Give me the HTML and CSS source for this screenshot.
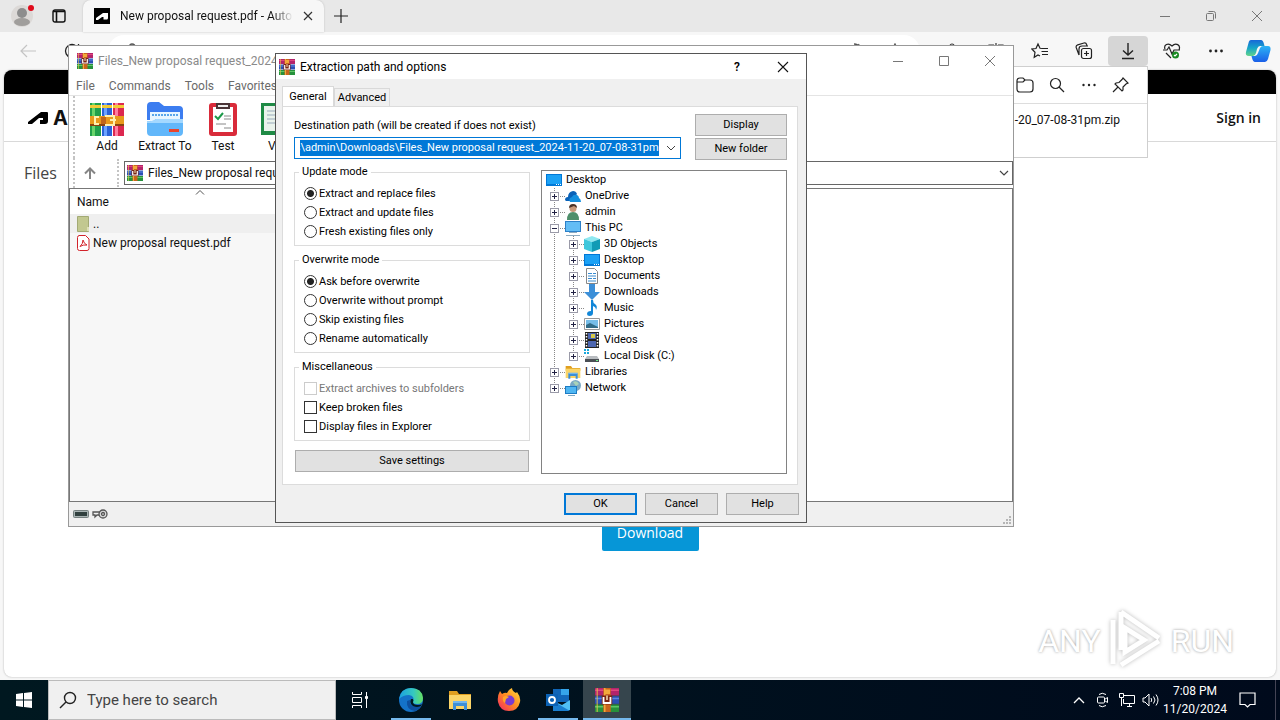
FILE: index.html
```html
<!DOCTYPE html>
<html lang="en">
<head>
    <meta charset="UTF-8">
    <meta name="viewport" content="width=device-width, initial-scale=1.0">
    <title>New proposal request.pdf - Autodesk</title>
    <link rel="stylesheet" href="styles.css">
</head>
<body>
    <!-- Shared icons -->
    <svg class="sprite" width="0" height="0" aria-hidden="true">
        <symbol id="i-rar" viewBox="0 0 16 16">
            <path fill="#b3246b" d="M0 0h16v5H0z"/>
            <path fill="#2b4fb5" d="M0 5.500h16v5H0z"/>
            <path fill="#27913c" d="M0 11h16v5H0z"/>
            <path fill="#e0457f" d="M0 1h16v1H0z"/>
            <path fill="#5c86e0" d="M0 6.500h16v1H0z"/>
            <path fill="#5fc468" d="M0 12h16v1H0z"/>
            <path fill="#e8c84a" d="M1 0h1v16H1z" opacity=".6"/>
            <path fill="#c9641c" d="M5.500 0h5v16h-5z"/>
            <path fill="#f2a93b" d="M6 0h1v16H6zM6 1h4v3H6z"/>
            <path fill="#7b2412" d="M4.500 5h7v6h-7z"/>
            <path fill="none" stroke="#fff" stroke-width="1.200" d="M5.700 6v4h4.600V6"/>
            <path fill="#f6e3b8" d="M7.500 5h1v3h-1z"/>
        </symbol>
        <symbol id="i-desktop" viewBox="0 0 16 16">
            <path fill="#0078d7" d="M0 2h16v12H0z"/>
            <path fill="#1ba1f5" d="M1 3h14v9H1z"/>
            <path fill="#fff" d="M10 12h1v1h-1zM12 12h1v1h-1zM14 12h1v1h-1z"/>
        </symbol>
        <symbol id="i-folder" viewBox="0 0 24 22">
            <path fill="#e09f1f" d="M1 2h8l2 3h12v4H1z"/>
            <path fill="#fbd568" d="M1 6h22v14H1z"/>
            <path fill="#3d8fd6" d="M5 13h14v8h-3v-4H8v4H5z"/>
            <path fill="#72b7ee" d="M5 12h14v2H5z"/>
        </symbol>
    </svg>

    <div class="browser">
        <!-- Tab strip -->
        <div class="tabstrip">
            <button class="icon-btn profile" aria-label="Profile">
                <svg width="24" height="24" viewBox="0 0 24 24"><circle cx="11" cy="12" r="11" fill="#dcd9d7"/><circle cx="11" cy="9" r="5" fill="#8d8d8d"/><ellipse cx="11" cy="18" rx="8" ry="4" fill="#a09e9c"/><circle cx="20" cy="4" r="3" fill="#e00b1c"/></svg>
            </button>
            <button class="icon-btn tab-actions" aria-label="Tab actions">
                <svg width="14" height="14" viewBox="0 0 14 14" fill="none" stroke="#111" stroke-width="1.400"><rect x="1" y="1" width="12" height="12" rx="2"/><path d="M1 2.500h12M4.500 3v10" stroke-width="1.600"/></svg>
            </button>
            <div class="tab">
                <svg width="16" height="16" viewBox="0 0 16 16"><path d="M0 0h16v16H0z"/><path fill="#fff" d="M2 12v-2l7-5h5v5c0 .8-.5 1.500-1.300 1.500H9.500V9H8l-4 3z"/></svg>
                <span class="tab-title">New proposal request.pdf - Auto</span>
                <button class="icon-btn" aria-label="Close tab">
                    <svg width="10" height="10" viewBox="0 0 10 10" stroke="#333" stroke-width="1.200"><path d="M1 1l8 8M9 1l-8 8"/></svg>
                </button>
            </div>
            <button class="icon-btn new-tab" aria-label="New tab">
                <svg width="14" height="14" viewBox="0 0 14 14" stroke="#222" stroke-width="1.200"><path d="M7 0v14M0 7h14"/></svg>
            </button>
            <div class="caption-btns">
                <button class="icon-btn" aria-label="Minimize"><svg width="12" height="12" viewBox="0 0 12 12" stroke="#777"><path d="M1 6.500h10"/></svg></button>
                <button class="icon-btn" aria-label="Restore"><svg width="12" height="12" viewBox="0 0 12 12" fill="none" stroke="#777"><rect x="1.500" y="3.500" width="7" height="7" rx="1"/><path d="M3.500 1.500h5q2 0 2 2v5"/></svg></button>
                <button class="icon-btn" aria-label="Close"><svg width="12" height="12" viewBox="0 0 12 12" stroke="#777"><path d="M1 1l10 10M11 1L1 11"/></svg></button>
            </div>
        </div>

        <!-- Address bar -->
        <div class="toolbar">
            <button class="icon-btn" aria-label="Back"><svg width="16" height="14" viewBox="0 0 16 14" fill="none" stroke="#c4c4c4" stroke-width="1.200"><path d="M16 7H1M7 1L1 7l6 6"/></svg></button>
            <button class="icon-btn" aria-label="Refresh"><svg width="16" height="16" viewBox="0 0 16 16" fill="none" stroke="#222" stroke-width="1.300"><path d="M14.500 8A6.500 6.500 0 1 1 12 2.900M14.500 1v4h-4"/></svg></button>
            <div class="omnibox">
                <svg width="12" height="14" viewBox="0 0 12 14" fill="none" stroke="#555" stroke-width="1.300"><path d="M3 6V4a3 3 0 0 1 6 0v2M1 6h10v7H1z"/></svg>
                <svg class="read" width="14" height="14" viewBox="0 0 14 14" fill="none" stroke="#555" stroke-width="1.300"><path d="M2 1q4 0 6 4M7 1l-5 12"/></svg>
                <svg width="14" height="14" viewBox="0 0 14 14" fill="none" stroke="#555" stroke-width="1.300"><path d="M7 1l2 4 4 1-3 3 1 4-4-2-4 2 1-4-3-3 4-1z"/></svg>
            </div>
            <div class="tools">
                <button class="icon-btn" aria-label="Extensions"><svg width="18" height="18" viewBox="0 0 18 18" fill="none" stroke="#333" stroke-width="1.200"><path d="M3 5h4V4a2 2 0 0 1 4 0v1h4v11H3z"/></svg></button>
                <button class="icon-btn" aria-label="Split screen"><svg width="18" height="18" viewBox="0 0 18 18" fill="none" stroke="#333" stroke-width="1.200"><path d="M9 1v16M7 3H2v12h5M11 3h5v12h-5"/></svg></button>
                <button class="icon-btn" aria-label="Favorites"><svg width="18" height="18" viewBox="0 0 18 18" fill="none" stroke="#222" stroke-width="1.200"><path d="M11 6.500L9 6.300 7 2 5 6.500.8 7l3.200 3.300-.8 5L7 13l2 1M11 6.500h6M10.500 9.500H17M11 12.500h6"/></svg></button>
                <button class="icon-btn" aria-label="Collections"><svg width="18" height="18" viewBox="0 0 18 18" fill="none" stroke="#222" stroke-width="1.200"><rect x="6.500" y="6.500" width="10" height="10" rx="2"/><path d="M11.500 9v5M9 11.500h5M4 13L1.200 5.500q-.5-2 1.500-2.600L9 1q2-.5 2.600 1.500l.4 1M4 13V7q0-3 3-3H13"/></svg></button>
                <button class="icon-btn active" aria-label="Downloads"><svg width="16" height="18" viewBox="0 0 16 18" fill="none" stroke="#222" stroke-width="1.400"><path d="M8 1v12M3 8.500L8 13l5-4.500M2 16.500h12"/></svg></button>
                <button class="icon-btn" aria-label="Browser essentials"><svg width="18" height="18" viewBox="0 0 18 18" fill="none" stroke="#222" stroke-width="1.200"><path d="M2 7C.5 3 5 0 9 4c4-4 9-1 7 4M0 8h4l2-3 3 7 2-4h6M3 11l5 5"/><circle cx="12.500" cy="13" r="3.500" fill="#188a22" stroke="none"/><path stroke="#fff" d="M11 13l1 1 2-2"/></svg></button>
                <button class="icon-btn" aria-label="Settings and more"><svg width="16" height="4" viewBox="0 0 16 4" fill="#222"><circle cx="2.500" cy="2" r="1.400"/><circle cx="8" cy="2" r="1.400"/><circle cx="13.500" cy="2" r="1.400"/></svg></button>
                <button class="icon-btn" aria-label="Copilot"><svg width="26" height="24" viewBox="0 0 26 24">
                    <defs><linearGradient id="cp1" x2="0" y2="1"><stop offset="0" stop-color="#1868d8"/><stop offset=".5" stop-color="#16a5c8"/><stop offset="1" stop-color="#63d48a"/></linearGradient><linearGradient id="cp2" x2="0" y2="1"><stop offset="0" stop-color="#2cb3f5"/><stop offset="1" stop-color="#1a5fe8"/></linearGradient></defs>
                    <path fill="url(#cp1)" d="M6 1h10q2 0 3 4l.5 2H15q-2 0-3 3l-1 4q-1 3-3 3H4q-4 0-3-4L3.500 4Q4 1 6 1z"/>
                    <path fill="url(#cp2)" d="M21 7h2q3 0 2.500 4L23 20q-1 3-3 3H10q-2 0-3-4l-.5-2H10q2 0 3-3l2-5q1-2 3-2z"/>
                </svg></button>
            </div>
        </div>

        <!-- Page -->
        <div class="page">
            <div class="band"></div>
            <header class="site-header">
                <a href="#" class="brand"><svg width="20" height="14" viewBox="0 0 20 14"><path d="M0 13v-2L13 1h6q1 0 1 1v8q0 3-3 3h-5V9h3V7h-4l-7 6z"/></svg>AUTODESK</a>
                <a href="#" class="sign-in">Sign in</a>
            </header>
            <h2>Files</h2>
            <button class="download">Download</button>
            <div class="watermark"><span>ANY</span><svg width="58" height="66" viewBox="0 0 58 66" fill="none" stroke="#fff" stroke-width="5"><path d="M14 4l38 26M14 4v38M6 12v44M14 57l38-24M18 20v24l19-12z"/></svg><span>RUN</span></div>
        </div>

        <!-- Downloads flyout -->
        <div class="flyout">
            <div class="flyout-head">
                <button class="icon-btn" aria-label="Open folder"><svg width="18" height="16" viewBox="0 0 18 16" fill="none" stroke="#222" stroke-width="1.200"><path d="M1 4q0-3 3-3h3l2 2h5q3 0 3 3v6q0 3-3 3H4q-3 0-3-3zM1 5h6l2-2"/></svg></button>
                <button class="icon-btn" aria-label="Search downloads"><svg width="16" height="16" viewBox="0 0 16 16" fill="none" stroke="#222" stroke-width="1.200"><circle cx="6.500" cy="6.500" r="5"/><path d="M10 10l5 5"/></svg></button>
                <button class="icon-btn" aria-label="More"><svg width="16" height="4" viewBox="0 0 16 4" fill="#222"><circle cx="2.500" cy="2" r="1.200"/><circle cx="8" cy="2" r="1.200"/><circle cx="13.500" cy="2" r="1.200"/></svg></button>
                <button class="icon-btn" aria-label="Pin"><svg width="18" height="18" viewBox="0 0 18 18" fill="none" stroke="#222" stroke-width="1.200"><path d="M11 2l5 5-2 1-3 3v3l-1 1-7-7 1-1 3-.5 3-3zM6 11l-5 5"/></svg></button>
            </div>
            <p>Files_New proposal request_2024-11-20_07-08-31pm.zip</p>
        </div>
    </div>

    <!-- Archive window -->
    <div class="window archive">
        <div class="titlebar">
            <svg width="16" height="16"><use href="#i-rar"/></svg>
            <span>Files_New proposal request_2024-</span>
            <div class="caption-btns">
                <button class="icon-btn" aria-label="Minimize"><svg width="12" height="12" viewBox="0 0 12 12" stroke="#777"><path d="M1 6.500h10"/></svg></button>
                <button class="icon-btn" aria-label="Maximize"><svg width="12" height="12" viewBox="0 0 12 12" fill="none" stroke="#777"><path d="M1.500 1.500h9v9h-9z"/></svg></button>
                <button class="icon-btn" aria-label="Close"><svg width="12" height="12" viewBox="0 0 12 12" stroke="#777"><path d="M1 1l10 10M11 1L1 11"/></svg></button>
            </div>
        </div>
        <nav class="menubar">
            <a href="#">File</a>
            <a href="#">Commands</a>
            <a href="#">Tools</a>
            <a href="#">Favorites</a>
        </nav>
        <div class="commands">
            <button>
                <svg width="34" height="34" viewBox="0 0 34 34"><path fill="#21a04a" d="M0 1h11v33H0z"/><path fill="#2a62d8" d="M12 1h10v33H12z"/><path fill="#dc2850" d="M23 1h11v33H23z"/><path fill="#69d46a" d="M2 1h3v33H2z"/><path fill="#6ba2ff" d="M14 1h3v33h-3z"/><path fill="#ff7da0" d="M25 1h3v33h-3z"/><path fill="#f3cb35" d="M0 3h11v3H0zM23 3h11v3H23zM12 3h10v3H12z"/><path fill="#e89a1c" d="M0 14h34v9H0z"/><path fill="#8a4310" d="M0 22h34v2H0z"/><path fill="none" stroke="#fff0ae" stroke-width="2" d="M9 15H5v7h4M15 14h9v9h-9M20 18h6"/><path fill="#c0651c" d="M11 15h5v7h-5z"/></svg>
                Add
            </button>
            <button>
                <svg width="36" height="34" viewBox="0 0 36 34"><path fill="#3c7df0" d="M0 4q0-4 4-4h8l5 4h15q4 0 4 4v10H0z"/><path fill="#e9f6ff" d="M3 10h30v10H3z"/><path stroke="#5aa6ea" stroke-width="2" stroke-dasharray="2 1" d="M5 13h26"/><path fill="#62b7fa" d="M0 19q6 1 9-2h27v13q0 4-4 4H4q-4 0-4-4z"/><path fill="#a3d8ff" d="M0 19q6 1 9-2h27v4H0z"/><path fill="#e8442e" d="M22 27h10v3H22z"/></svg>
                Extract To
            </button>
            <button>
                <svg width="28" height="34" viewBox="0 0 28 34"><rect y="1" width="28" height="33" rx="3" fill="#d92b3a"/><path fill="#fff" d="M4 5h20v25H4z"/><path fill="#4a3436" d="M7 1h14v6H7z"/><path fill="#eee" d="M9 3h10v2H9z"/><path fill="none" stroke="#1d9a4a" stroke-width="2" d="M6 14l3 3 5-6"/><path stroke="#888" d="M15 14h7M15 17h7M7 22h10M15 26h7"/></svg>
                Test
            </button>
            <button>
                <svg width="40" height="34" viewBox="0 0 40 34"><path fill="#1f8a45" d="M0 1h40v32H0z"/><path fill="#eaf3ec" d="M3 4h34v25H3z"/><path stroke="#9ab" d="M6 9h12M6 13h12M6 17h12M6 21h12"/></svg>
                View
            </button>
        </div>
        <div class="pathrow">
            <button class="icon-btn up" aria-label="Up one level"><svg width="12" height="12" viewBox="0 0 12 12" fill="none" stroke="#858585" stroke-width="2"><path d="M6 12V2M1 6.500L6 1.500l5 5"/></svg></button>
            <div class="path">
                <svg width="16" height="16"><use href="#i-rar"/></svg>
                <span>Files_New proposal requ</span>
                <svg width="10" height="6" viewBox="0 0 10 6" fill="none" stroke="#444" stroke-width="1.200"><path d="M1 1l4 4 4-4"/></svg>
            </div>
        </div>
        <div class="listing">
            <svg class="sort" width="10" height="5" viewBox="0 0 10 5" fill="none" stroke="#555"><path d="M1 4.500l4-4 4 4"/></svg>
            <table>
                <thead>
                    <tr><th>Name</th></tr>
                </thead>
                <tbody>
                    <tr class="current"><td><svg width="13" height="16" viewBox="0 0 13 16"><path fill="#c2c890" stroke="#a3aa75" d="M.5.500h11v15H.5z"/><path fill="#dde0b8" d="M10 11h2v4h-2z"/></svg>..</td></tr>
                    <tr><td><svg width="13" height="16" viewBox="0 0 13 16" fill="none" stroke="#d2222a"><path fill="#fff" d="M2 .5h6.500L12 4v9.500q0 2-2 2H2.500q-2 0-2-2v-11q0-2 2-2z"/><path d="M6 5q1 4 4 5-4-.5-7 1.500Q6 9 6 5z"/></svg>New proposal request.pdf</td></tr>
                </tbody>
            </table>
        </div>
        <div class="statusbar">
            <svg width="16" height="8" viewBox="0 0 16 8"><rect x=".5" y=".5" width="15" height="7" rx="1" fill="#a9b4b4" stroke="#768080"/><path fill="#31403f" d="M2 2h12v4H2z"/></svg>
            <svg width="16" height="10" viewBox="0 0 16 10" fill="none" stroke="#555" stroke-width="1.300"><path d="M8 3H1v3h2v2l2-2h3"/><circle cx="11" cy="5" r="4" fill="#ddd"/><circle cx="11" cy="5" r="1.500"/></svg>
            <svg class="grip" width="10" height="10" viewBox="0 0 10 10" fill="#b5b5b5"><path d="M7 0h2v2H7zM7 3h2v2H7zM4 3h2v2H4zM7 6h2v2H7zM4 6h2v2H4zM1 6h2v2H1z"/></svg>
        </div>
    </div>

    <!-- Extraction dialog -->
    <form class="window dialog">
        <div class="titlebar">
            <svg width="16" height="16"><use href="#i-rar"/></svg>
            <span>Extraction path and options</span>
            <div class="caption-btns">
                <button type="button" class="icon-btn help-btn" aria-label="Help">?</button>
                <button type="button" class="icon-btn" aria-label="Close"><svg width="12" height="12" viewBox="0 0 12 12" stroke="#111" stroke-width="1.100"><path d="M1 1l10 10M11 1L1 11"/></svg></button>
            </div>
        </div>
        <div class="tabs">
            <button type="button" class="selected">General</button>
            <button type="button">Advanced</button>
        </div>
        <div class="panel">
            <div class="dest">
                <label for="dest">Destination path (will be created if does not exist)</label>
                <div class="combo">
                    <input id="dest" type="text" value="C:\Users\admin\Downloads\Files_New proposal request_2024-11-20_07-08-31pm">
                    <button type="button" class="icon-btn" aria-label="History"><svg width="10" height="6" viewBox="0 0 10 6" fill="none" stroke="#444"><path d="M1 1l4 4 4-4"/></svg></button>
                </div>
            </div>
            <div class="dest-btns">
                <button type="button" class="btn">Display</button>
                <button type="button" class="btn">New folder</button>
            </div>
            <div class="options">
                <fieldset>
                    <legend>Update mode</legend>
                    <label><input type="radio" name="update" checked>Extract and replace files</label>
                    <label><input type="radio" name="update">Extract and update files</label>
                    <label><input type="radio" name="update">Fresh existing files only</label>
                </fieldset>
                <fieldset>
                    <legend>Overwrite mode</legend>
                    <label><input type="radio" name="overwrite" checked>Ask before overwrite</label>
                    <label><input type="radio" name="overwrite">Overwrite without prompt</label>
                    <label><input type="radio" name="overwrite">Skip existing files</label>
                    <label><input type="radio" name="overwrite">Rename automatically</label>
                </fieldset>
                <fieldset>
                    <legend>Miscellaneous</legend>
                    <label class="disabled"><input type="checkbox" disabled>Extract archives to subfolders</label>
                    <label><input type="checkbox">Keep broken files</label>
                    <label><input type="checkbox">Display files in Explorer</label>
                </fieldset>
                <button type="button" class="btn">Save settings</button>
            </div>
            <div class="tree">
                <div class="node root"><svg width="16" height="16"><use href="#i-desktop"/></svg>Desktop</div>
                <ul>
                    <li><div class="node"><i></i><svg width="16" height="16" viewBox="0 0 16 16"><path fill="#0a62b8" d="M0 12q0-3 3-3 0-5 5-6 3 0 4 3l-6 7H1z"/><path fill="#1490df" d="M5 14q-2-4 2-5 1-3 5-2 2 1 2 3 2 1 2 4z"/></svg>OneDrive</div></li>
                    <li><div class="node"><i></i><svg width="16" height="16" viewBox="0 0 16 16"><circle cx="8" cy="4.500" r="3.500" fill="#c9997a"/><path fill="#4b3328" d="M4 4q0-4 4-4t4 4l-3-2z"/><path fill="#4f8f6b" d="M2 16q0-8 6-8t6 8z"/></svg>admin</div></li>
                    <li><div class="node"><i class="open"></i><svg width="16" height="16" viewBox="0 0 16 16"><path fill="#2c80c8" d="M0 1h16v11H0z"/><path fill="#63bdf5" d="M1 2h14v9H1z"/><path fill="#8dabc0" d="M4 12h8v1H4zM1 15h14v1H1z"/></svg>This PC</div>
                        <ul>
                            <li><div class="node"><i></i><svg width="16" height="16" viewBox="0 0 16 16"><path fill="#8fe8f0" d="M0 3l8-3 8 3-8 3z"/><path fill="#3fc7dc" d="M0 3l8 3v10l-8-3z"/><path fill="#119bb5" d="M16 3L8 6v10l8-3z"/></svg>3D Objects</div></li>
                            <li><div class="node"><i></i><svg width="16" height="16"><use href="#i-desktop"/></svg>Desktop</div></li>
                            <li><div class="node"><i></i><svg width="16" height="16" viewBox="0 0 16 16"><path fill="#fff" stroke="#888" d="M2.500.500h8l3 3v12h-11z"/><path stroke="#3a8cd0" d="M4 5.500h4M9 5.500h3M4 8h8M4 10.500h4M9 10.500h3M4 13h8"/></svg>Documents</div></li>
                            <li><div class="node"><i></i><svg width="16" height="16" viewBox="0 0 16 16"><path fill="#3c8fd8" d="M5 0h6v8h5l-8 8-8-8h5z"/></svg>Downloads</div></li>
                            <li><div class="node"><i></i><svg width="16" height="16" viewBox="0 0 16 16"><path fill="#1287d8" d="M7 0h2q0 3 2 4 3 2 1 6 0-3-3-4v7q0 3-3.500 3Q3 16 3 14q0-3 4-3z"/></svg>Music</div></li>
                            <li><div class="node"><i></i><svg width="16" height="16" viewBox="0 0 16 16"><path fill="#fff" stroke="#999" d="M.5 2.500h15v11H.5z"/><path fill="#76bde8" d="M2 4h12v8H2z"/><path fill="#316b86" d="M2 9l4-2 8 4v1H2z"/></svg>Pictures</div></li>
                            <li><div class="node"><i></i><svg width="16" height="16" viewBox="0 0 16 16"><path fill="#222" d="M1 0h14v16H1z"/><path stroke="#fff" stroke-width="1.500" stroke-dasharray="1.500 1.500" d="M2.500 1v15M13.500 1v15"/><path fill="#4c66b0" d="M4 1h8v6H4zM4 9h8v6H4z"/><path fill="#d5c84a" d="M7 2h4v4H7z"/></svg>Videos</div></li>
                            <li><div class="node"><i></i><svg width="16" height="16" viewBox="0 0 16 16"><path fill="#19a8dc" d="M0 1h2v2H0zM3 1h2v2H3zM0 4h2v2H0zM3 4h2v2H3z"/><path fill="#b8bcc0" d="M3 8h10l2 3H1z"/><path fill="#4a4f54" d="M1 11h14v3H1z"/><path fill="#6ef08a" d="M12 12h2v1h-2z"/></svg>Local Disk (C:)</div></li>
                        </ul>
                    </li>
                    <li><div class="node"><i></i><svg width="16" height="16"><use href="#i-folder"/></svg>Libraries</div></li>
                    <li><div class="node"><i></i><svg width="16" height="16" viewBox="0 0 16 16"><circle cx="10.500" cy="5.500" r="5.500" fill="#7aa9c4"/><path fill="#a9d3b8" d="M8 2q4-2 6 2l-3 2z"/><path fill="#1d7cc4" d="M0 6h12v8H0z"/><path fill="#4fb6f2" d="M1 7h10v6H1z"/><path fill="#7fa8c2" d="M3 15h7v1H3z"/></svg>Network</div></li>
                </ul>
            </div>
        </div>
        <div class="actions">
            <button type="button" class="btn default">OK</button>
            <button type="button" class="btn">Cancel</button>
            <button type="button" class="btn">Help</button>
        </div>
    </form>

    <!-- Taskbar -->
    <div class="taskbar">
        <button class="icon-btn start" aria-label="Start"><svg width="16" height="16" viewBox="0 0 16 16" fill="#fff"><path d="M0 2l7-1v6.500H0zM8 1l8-1v7.500H8zM0 8.500h7V15l-7-1zM8 8.500h8V16l-8-1z"/></svg></button>
        <label class="search">
            <svg width="18" height="18" viewBox="0 0 18 18" fill="none" stroke="#222" stroke-width="1.400"><circle cx="11" cy="7" r="5.500"/><path d="M7 11l-6 6"/></svg>
            <input type="text" placeholder="Type here to search" aria-label="Search">
        </label>
        <div class="apps">
            <button class="icon-btn task-view" aria-label="Task view"><svg width="18" height="16" viewBox="0 0 18 16" fill="none" stroke="#fff"><path d="M1.500 0v2.500h9V0M1.500 16v-2.500h9V16M1.500 5.500h9v5h-9zM15.500 0v16"/><path fill="#fff" d="M14.500 4.500h2v2h-2z"/></svg></button>
            <button class="icon-btn running" aria-label="Edge"><svg width="24" height="24" viewBox="0 0 24 24">
                <defs><linearGradient id="ed1"><stop offset="0" stop-color="#1ba0e0"/><stop offset=".6" stop-color="#35c8c0"/><stop offset="1" stop-color="#66e060"/></linearGradient></defs>
                <circle cx="12" cy="12" r="12" fill="#1472c8"/><path fill="url(#ed1)" d="M0 11Q2 0 12 0q11 0 12 10 0 6-6 6-5 0-4-3 2-5-4-6-6 0-10 4z"/><path fill="#0d4f9e" d="M8 13q-1 9 8 10 4-1 6-5-4 2-8 0-4-2-3-6z"/><path fill="#001820" d="M14 11q1 2 0 3 0 3 5 3 3 0 4-1l-1 2q-4 2-8 0-4-3-2-7z"/></svg></button>
            <button class="icon-btn" aria-label="File Explorer"><svg width="24" height="22"><use href="#i-folder"/></svg></button>
            <button class="icon-btn" aria-label="Firefox"><svg width="24" height="24" viewBox="0 0 24 24">
                <defs><linearGradient id="ff1" x1="1" y1="0" x2="0" y2="1"><stop offset="0" stop-color="#ffe040"/><stop offset=".5" stop-color="#ff8a20"/><stop offset="1" stop-color="#f2206c"/></linearGradient></defs>
                <path fill="url(#ff1)" d="M3 3l2 3q3-2 5-1 2-4 5-5 0 3 4 5l1-1q4 5 3 10-2 9-11 9T1 14Q0 8 3 3z"/><circle cx="12.500" cy="12.500" r="5" fill="#7a3bd0"/><path fill="#ffa52a" d="M6 9q3-2 6 0l-3 2-1 4q-3-2-2-6z"/></svg></button>
            <button class="icon-btn running" aria-label="Outlook"><svg width="24" height="22" viewBox="0 0 24 22"><path fill="#1066b8" d="M7 0h16v13H7z"/><path fill="#35a5ea" d="M15 0h8v6h-8z"/><path fill="#50c0f5" d="M7 12l9 4 8-5v10H7z"/><path fill="#1a7fd0" d="M7 12l17 10H7z"/><path fill="#0b62b5" d="M0 5h12v12H0z"/><circle cx="6" cy="11" r="3" fill="none" stroke="#fff" stroke-width="1.800"/></svg></button>
            <button class="icon-btn running current" aria-label="WinRAR"><svg width="24" height="24"><use href="#i-rar"/></svg></button>
        </div>
        <div class="tray">
            <button class="icon-btn" aria-label="Show hidden icons"><svg width="12" height="8" viewBox="0 0 12 8" fill="none" stroke="#fff" stroke-width="1.300"><path d="M1 7l5-5 5 5"/></svg></button>
            <button class="icon-btn" aria-label="Meet now"><svg width="14" height="16" viewBox="0 0 14 16" fill="none" stroke="#fff"><rect x="1.500" y="5" width="7" height="6" rx="1"/><path d="M8.500 7.500l3-2v5l-3-2M3 2.500q3-2.500 7 0M3 13.500q3 2.500 7 0"/></svg></button>
            <button class="icon-btn" aria-label="Network"><svg width="16" height="14" viewBox="0 0 16 14" fill="none" stroke="#fff"><path d="M5 2.500h10.500v8H4.500V6M8 13.500h5M10.500 11v2M.5.500h4v4h-4zM2.500 5v8"/></svg></button>
            <button class="icon-btn" aria-label="Volume"><svg width="18" height="14" viewBox="0 0 18 14" fill="none" stroke="#fff"><path d="M1 5h2l4-4v12L3 9H1zM9 5q1.500 2 0 4M11.500 3.500q3 3.500 0 7M14 1.500q4 5.500 0 11"/></svg></button>
            <div class="clock">7:08 PM<br>11/20/2024</div>
            <button class="icon-btn notify" aria-label="Notifications"><svg width="17" height="16" viewBox="0 0 17 16" fill="none" stroke="#fff" stroke-width="1.200"><path d="M1 1h15v11.500h-5L8.500 15 6 12.500H1z"/></svg></button>
        </div>
    </div>

    <script>
        // Keep the end of a long path in view
        const dest = document.getElementById('dest');
        dest.scrollLeft = dest.scrollWidth;
    </script>
</body>
</html>
```

FILE: styles.css
```css
* {
    box-sizing: border-box;
    margin: 0;
    padding: 0;
}

body {
    font-family: Roboto, "Open Sans", sans-serif;
    font-size: 12px;
    line-height: 16px;
    color: #111;
    height: 100vh;
    display: flex;
    flex-direction: column;
    overflow: hidden;
    position: relative;
}

button, input {
    font: inherit;
    color: inherit;
}

a {
    color: inherit;
    text-decoration: none;
}

svg {
    display: block;
    flex: none;
}

.sprite {
    position: absolute;
}

.icon-btn {
    border: 0;
    background: none;
    display: flex;
    align-items: center;
    justify-content: center;
}

/* Browser */
.browser {
    flex: 1;
    min-height: 0;
    background: #f7f7f7;
    display: flex;
    flex-direction: column;
    padding-bottom: 3px;
}

.tabstrip {
    height: 32px;
    background: #e8e8e8;
    display: flex;
    align-items: center;
}

.profile {
    margin-left: 11px;
}

.tab-actions {
    width: 48px;
}

.tab {
    width: 241px;
    height: 32px;
    background: #f7f7f7;
    border-radius: 8px 8px 0 0;
    box-shadow: 0 0 2px #bbb;
    display: flex;
    align-items: center;
    padding: 0 11px;
    gap: 10px;
}

.tab-title {
    flex: 1;
    white-space: nowrap;
    -webkit-mask-image: linear-gradient(to right, #000 88%, transparent);
    mask-image: linear-gradient(to right, #000 88%, transparent);
}

.new-tab {
    width: 34px;
}

.caption-btns {
    margin-left: auto;
    display: flex;
}

.caption-btns .icon-btn {
    width: 46px;
    height: 28px;
}

.toolbar {
    height: 38px;
    display: flex;
    align-items: center;
    padding: 0 4px 0 20px;
}

.toolbar > .icon-btn {
    margin-right: 28px;
}

.omnibox {
    flex: 1;
    height: 32px;
    border-radius: 16px;
    background: #fff;
    padding: 8px 18px;
    display: flex;
    gap: 22px;
}

.omnibox .read {
    margin-left: auto;
}

.tools {
    display: flex;
    margin-left: 8px;
}

.tools .icon-btn {
    width: 40px;
    height: 30px;
    margin-left: 4px;
    border-radius: 4px;
}

.tools .icon-btn:last-child {
    width: 36px;
}

.tools .active {
    background: #d6d6d6;
}

.page {
    flex: 1;
    min-height: 0;
    margin: 0 4px;
    background: #fff;
    border-radius: 8px;
    box-shadow: 0 0 2px #aaa;
    overflow: hidden;
    display: flex;
    flex-direction: column;
    position: relative;
    font-family: "Open Sans", sans-serif;
}

.band {
    height: 24px;
    background: #000;
}

.site-header {
    height: 48px;
    border-bottom: 1px solid #d9d9d9;
    display: flex;
    justify-content: space-between;
    align-items: center;
    padding: 0 15px 0 24px;
}

.brand {
    display: flex;
    align-items: center;
    gap: 5px;
    font: bold 20px/24px Inter, sans-serif;
}

.sign-in {
    font-size: 14px;
    font-weight: 600;
}

.page h2 {
    font-size: 16px;
    font-weight: 400;
    line-height: 24px;
    color: #444;
    padding: 19px 20px;
}

.download {
    align-self: center;
    flex: none;
    width: 97px;
    height: 36px;
    margin-top: 311px;
    margin-left: 20px;
    border: 0;
    border-radius: 2px;
    background: #0696d7;
    color: #fff;
    font-size: 14px;
}

.watermark {
    position: absolute;
    right: 42px;
    bottom: 3px;
    display: flex;
    align-items: center;
    gap: 6px;
    font: 32px/44px Roboto, sans-serif;
    color: #fff;
    text-shadow: 0 0 3px #999;
}

.watermark svg {
    filter: drop-shadow(0 0 2px #bbb);
}

/* Downloads flyout hangs below its toolbar button */
.flyout {
    position: absolute;
    top: 66px;
    right: 132px;
    width: 360px;
    height: 92px;
    background: #fff;
    border: 1px solid #cfcfcf;
}

.flyout-head {
    height: 37px;
    border-bottom: 1px solid #ddd;
    display: flex;
    justify-content: flex-end;
    padding-right: 10px;
}

.flyout-head .icon-btn {
    width: 32px;
}

.flyout p {
    padding: 8px 27px;
    text-align: right;
    white-space: nowrap;
}

/* Desktop windows */
.window {
    position: absolute;
    background: #f0f0f0;
    border: 1px solid #999;
}

.titlebar {
    display: flex;
    align-items: center;
    gap: 5px;
    background: #fff;
    white-space: nowrap;
}

.archive {
    left: 68px;
    top: 45px;
    width: 946px;
    background: #fff;
}

.archive .titlebar {
    height: 30px;
    padding-left: 8px;
    color: #8a8a8a;
}

.menubar {
    display: flex;
    gap: 14px;
    height: 20px;
    padding: 2px 7px;
    border-bottom: 1px solid #e4e4e4;
    color: #6a6a6a;
}

.commands {
    display: flex;
    height: 62px;
    margin-left: 4px;
    border-left: 2px dotted #c4c4c4;
    padding: 6px 3px;
}

.commands button {
    width: 58px;
    border: 0;
    background: none;
    display: flex;
    flex-direction: column;
    align-items: center;
    gap: 2px;
    white-space: nowrap;
}

.pathrow {
    display: flex;
    align-items: center;
    height: 30px;
    margin-left: 4px;
    border-left: 2px dotted #c4c4c4;
}

.up {
    width: 44px;
    height: 28px;
    margin-right: 5px;
    padding-right: 12px;
    border-right: 2px dotted #c4c4c4;
}

.path {
    flex: 1;
    height: 24px;
    border: 1px solid #666;
    display: flex;
    align-items: center;
    gap: 5px;
    padding: 0 3px 0 2px;
}

.path span {
    flex: 1;
}

.listing {
    position: relative;
    height: 314px;
    border: 1px solid #777;
}

.sort {
    position: absolute;
    left: 125px;
    top: 1px;
}

table {
    border-collapse: collapse;
    width: 260px;
    height: 100%;
    background: #f7f7f7;
}

thead {
    background: #fff;
}

th {
    height: 25px;
    text-align: left;
    font-weight: 400;
    padding-left: 7px;
}

td {
    height: 19px;
    padding-left: 7px;
}

td svg {
    display: inline-block;
    vertical-align: top;
    margin-right: 3px;
}

tbody tr:last-child td {
    height: auto;
    vertical-align: top;
    padding-top: 2px;
}

.current td {
    background: #efefef;
}

.statusbar {
    height: 24px;
    background: #f0f0f0;
    display: flex;
    align-items: center;
    gap: 3px;
    padding: 0 1px 0 4px;
}

.grip {
    margin-left: auto;
    align-self: flex-end;
}

/* Extraction dialog */
.dialog {
    left: 275px;
    top: 53px;
    width: 532px;
    padding-bottom: 7px;
    border-color: #555;
    font-size: 11px;
    color: #000;
}

.dialog .titlebar {
    height: 25px;
    padding-left: 3px;
    font-size: 12px;
}

.help-btn {
    font-weight: 600;
}

.tabs {
    display: flex;
    align-items: flex-end;
    margin: 7px 6px 0;
    height: 20px;
}

.tabs button {
    height: 18px;
    width: 56px;
    border: 1px solid #d9d9d9;
    border-bottom: 0;
    background: #f0f0f0;
}

.tabs .selected {
    height: 20px;
    width: 52px;
    background: #fff;
}

.panel {
    margin: 0 8px 0 6px;
    background: #fff;
    border: 1px solid #dcdcdc;
    display: grid;
    grid-template-columns: 236px 1fr 92px;
    padding: 7px 10px 10px 11px;
}

.dest {
    grid-column: 1 / 3;
    margin-right: 14px;
    padding-top: 4px;
}

.dest label {
    display: block;
    height: 19px;
}

.combo {
    height: 22px;
    border: 1px solid #0078d7;
    display: flex;
    padding: 2px 0 2px 5px;
}

.combo input {
    flex: 1;
    min-width: 0;
    border: 0;
    background: #0078d7;
    color: #fff;
}

.combo .icon-btn {
    width: 18px;
    margin-left: 3px;
}

.dest-btns {
    display: flex;
    flex-direction: column;
    gap: 2px;
}

.btn {
    height: 22px;
    border: 1px solid #adadad;
    background: #e1e1e1;
}

.options {
    margin-top: 4px;
    padding-bottom: 2px;
    display: flex;
    flex-direction: column;
}

fieldset {
    border: 1px solid #dcdcdc;
    padding: 4px 9px;
    margin-bottom: 6px;
    display: flex;
    flex-direction: column;
}

legend {
    padding: 0 3px;
    margin-left: -5px;
}

fieldset label {
    display: flex;
    align-items: center;
    gap: 2px;
    height: 19px;
}

fieldset input {
    appearance: none;
    width: 13px;
    height: 13px;
    border: 1px solid #333;
    background: #fff;
}

fieldset input[type="radio"] {
    border-radius: 50%;
}

fieldset input[type="radio"]:checked {
    background: radial-gradient(circle, #222 3px, #fff 4px);
}

.disabled {
    color: #777;
}

.disabled input {
    border-color: #ccc;
}

.options .btn {
    margin: 3px 1px 0;
}

.tree {
    grid-column: 2 / 4;
    margin: 10px 0 0 11px;
    border: 1px solid #828282;
    padding: 1px 4px;
    line-height: 16px;
}

.tree ul {
    list-style: none;
    margin-left: 8px;
    background: repeating-linear-gradient(#888 0 1px, transparent 1px 2px) no-repeat left top / 1px calc(100% - 8px);
}

.tree ul ul {
    margin-left: 19px;
}

.node {
    display: flex;
    align-items: center;
    gap: 4px;
    height: 16px;
    margin-left: -4px;
    background: repeating-linear-gradient(to right, #888 0 1px, transparent 1px 2px) no-repeat left center / 15px 1px;
}

/* Expander box */
.node i {
    width: 9px;
    height: 9px;
    border: 1px solid #9a9aa8;
    background:
        linear-gradient(#224, #224) center / 5px 1px no-repeat,
        linear-gradient(#224, #224) center / 1px 5px no-repeat,
        #fff;
    margin-right: 2px;
}

.node .open {
    background: linear-gradient(#224, #224) center / 5px 1px no-repeat, #fff;
}

.root {
    margin-left: 0;
    background: none;
}

.actions {
    display: flex;
    justify-content: flex-end;
    gap: 8px;
    padding: 8px 7px 0;
}

.actions .btn {
    width: 73px;
}

.actions .default {
    border: 2px solid #0078d7;
}

/* Taskbar */
.taskbar {
    height: 40px;
    flex: none;
    background: linear-gradient(to right, #001820, #000a1c);
    color: #fff;
    display: flex;
}

.start {
    width: 48px;
}

.search {
    width: 288px;
    background: #f0f0f0;
    border: 1px solid #bbb;
    display: flex;
    align-items: center;
    gap: 10px;
    padding: 0 10px;
    font-size: 15px;
}

.search input {
    flex: 1;
    min-width: 0;
    border: 0;
    background: none;
}

.search input::placeholder {
    color: #444;
}

.apps {
    display: flex;
    gap: 1px;
}

.apps .icon-btn {
    width: 48px;
    height: 40px;
}

.apps .task-view {
    margin-right: 2px;
}

.apps .running {
    background: linear-gradient(#76b9ed, #76b9ed) bottom / 40px 2px no-repeat;
}

.apps .current {
    background: linear-gradient(#76b9ed, #76b9ed) bottom / 48px 2px no-repeat, #36454d;
}

.tray {
    margin-left: auto;
    display: flex;
    align-items: center;
    padding-right: 8px;
    border-right: 1px solid #445;
    margin-right: 4px;
}

.tray .icon-btn {
    width: 24px;
    height: 40px;
}

.clock {
    width: 64px;
    text-align: center;
    line-height: 18px;
}

.tray .notify {
    width: 40px;
}
```
